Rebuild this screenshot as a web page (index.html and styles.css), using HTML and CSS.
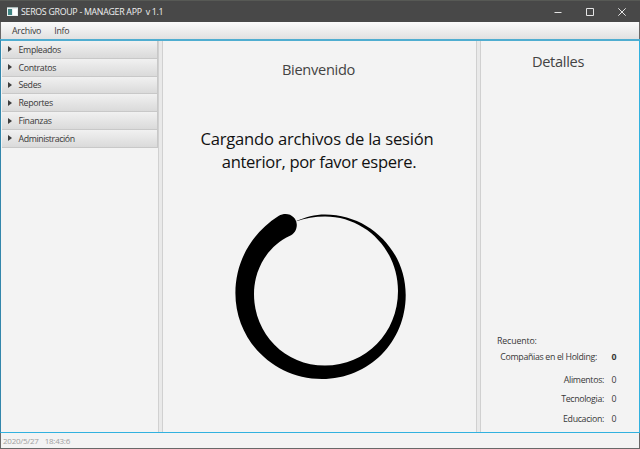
FILE: index.html
```html
<!DOCTYPE html>
<html lang="es">
<head>
<meta charset="utf-8">
<title>SEROS GROUP - MANAGER APP v 1.1</title>
<link rel="stylesheet" href="styles.css">
</head>
<body>
<div class="window">
  <header class="titlebar">
    <svg class="app-icon" width="11" height="9" viewBox="0 0 11 9"><rect width="11" height="9" fill="#e9eeee"/><rect x="1" y="2" width="4" height="6" fill="#3f8583"/><rect x="6" y="2" width="4" height="6" fill="#fff"/><path d="M0 .5h11" stroke="#a9b8b8"/></svg>
    <span class="title">SEROS GROUP - MANAGER APP&nbsp; v 1.1</span>
    <div class="controls">
      <svg width="8" height="8" viewBox="0 0 8 8"><path d="M.5 4.5h7"/></svg>
      <svg width="8" height="8" viewBox="0 0 8 8"><path d="M.5.5h7v7h-7z"/></svg>
      <svg width="8" height="8" viewBox="0 0 8 8"><path d="M.3.3l7.4 7.4M7.7.3L.3 7.7"/></svg>
    </div>
  </header>
  <nav class="menubar"><span>Archivo</span><span>Info</span></nav>
  <div class="split">
    <aside class="sidebar">
      <div class="pane"><i></i><span>Empleados</span></div>
      <div class="pane"><i></i><span>Contratos</span></div>
      <div class="pane"><i></i><span>Sedes</span></div>
      <div class="pane"><i></i><span>Reportes</span></div>
      <div class="pane"><i></i><span>Finanzas</span></div>
      <div class="pane"><i></i><span>Administración</span></div>
    </aside>
    <div class="divider"></div>
    <main class="welcome">
      <h1>Bienvenido</h1>
      <p class="message"><span class="line1">Cargando archivos de la sesión</span><br><span class="line2">anterior, por favor espere.</span></p>
      <svg class="loader" width="172" height="167" viewBox="235 213 172 167">
        <path d="M296.3 221C305 217 315 214.4 325 214.4C369 214.4 405.7 250 405.7 295C405.7 342 369 379 322 379C274 379 235.4 341 235.4 293C235.4 261 252 233 278.5 216C288 210.5 297 217 296.8 225C296.8 230 294 234 289.5 236C268 246 254 269 254 294C254 334 285 365.6 325 365.6C366 365.6 398 333 398 291C398 249 365 216.4 325 216.4C315 216.4 305 218 296.5 221.3Z"/>
      </svg>
    </main>
    <div class="divider"></div>
    <section class="details">
      <h2>Detalles</h2>
      <div class="summary">
        <div class="recount">Recuento:</div>
        <div class="row holding"><span>Compañias en el Holding:</span><b>0</b></div>
        <div class="row"><span>Alimentos:</span><em>0</em></div>
        <div class="row"><span>Tecnologia:</span><em>0</em></div>
        <div class="row"><span>Educacion:</span><em>0</em></div>
      </div>
    </section>
  </div>
  <footer class="status"><span>2020/5/27</span><span>18:43:6</span></footer>
</div>
</body>
</html>
```
FILE: styles.css
```css
* { box-sizing: border-box; }
body { margin: 0; font-family: "Open Sans", "Noto Sans", sans-serif; font-size: 8.8px; letter-spacing: -0.32px; color: #383838; }
h1, h2, p { margin: 0; font-weight: 400; }
.window { width: 640px; height: 449px; display: flex; flex-direction: column; background: #f3f3f3; border: solid #686868; border-width: 0 1px 1px; }
.titlebar { height: 22px; flex: none; margin: 0 -1px; padding: 0 14px 0 7px; display: flex; align-items: center; background: #484848; border-top: 1px solid #575955; color: #f0f0f0; }
.title { margin-left: 3px; font-size: 8.8px; letter-spacing: -0.28px; white-space: nowrap; }
.controls { margin-left: auto; display: flex; gap: 24px; }
.controls svg { fill: none; stroke: #e4e4e4; stroke-width: 1; }
.menubar { height: 17px; flex: none; display: flex; align-items: center; padding: 0 0 0 11px; gap: 13px; letter-spacing: -0.22px; background: linear-gradient(#fafafa, #e1e1e1); }
.split { height: 394px; flex: none; display: flex; margin: 0 -1px; border: 1px solid #31b1df; border-top: 2px solid #4fadd0; border-left-color: #3286ab; background: #f3f3f3; }
.sidebar { width: 157px; padding-left: 1px; }
.pane { height: 17.8px; display: flex; align-items: center; padding-left: 6px; border: solid #c8c8c8; border-width: 0 1px 1px 0; background: linear-gradient(#f1f1f1, #dadada); }
.pane i { width: 0; height: 0; border: solid transparent; border-width: 3px 0 3px 4px; border-left-color: #3d3d3d; }
.pane span { margin-left: 6.5px; padding-top: 1px; }
.pane:last-child { letter-spacing: -0.4px; }
.divider { width: 5px; border: 1px solid #d0d0d0; border-width: 0 1px; background: #e9e9e9; }
.welcome { width: 313px; display: flex; flex-direction: column; align-items: center; }
h1, h2 { font-size: 14.6px; line-height: 20px; letter-spacing: -0.3px; color: #434343; }
h1 { margin-top: 18px; padding-right: 2px; }
.message { margin-top: 48px; padding-right: 5px; font-size: 16.6px; line-height: 23px; letter-spacing: -0.2px; color: #111; text-align: center; white-space: nowrap; }
.line2 { padding-left: 4px; letter-spacing: -0.34px; }
.loader { margin-top: 40px; margin-left: 2px; }
.details { flex: 1; display: flex; flex-direction: column; }
h2 { margin-top: 10px; padding-right: 4px; text-align: center; }
.summary { margin: auto 21.5px 2px 15px; }
.recount { height: 16px; padding-left: 1px; line-height: 16px; letter-spacing: -0.15px; }
.row { display: flex; justify-content: flex-end; height: 19.3px; line-height: 16px; white-space: nowrap; }
.row b, .row em { width: 6px; margin-left: 7.5px; font-style: normal; }
.holding { height: 23.3px; }
.holding b { margin-left: 14.5px; }
.status { height: 15px; padding: 0 0 1px 2px; display: flex; align-items: center; gap: 6px; color: #a0a0a0; font-size: 8px; letter-spacing: -0.25px; }
```
